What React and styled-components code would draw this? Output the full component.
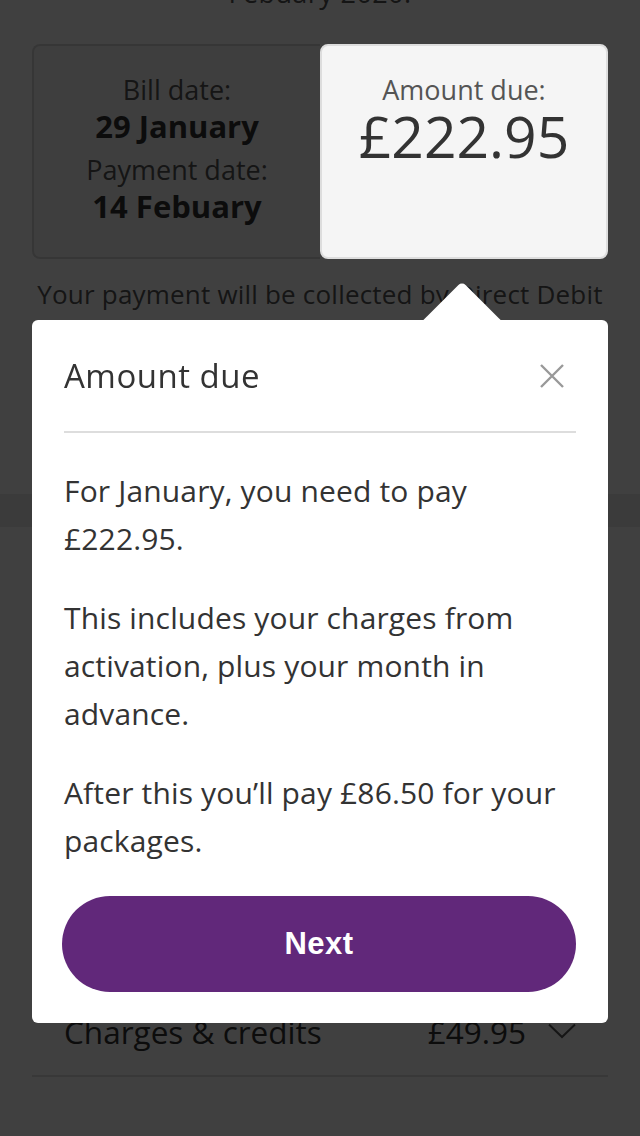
import React from "react";
import styled, { createGlobalStyle } from "styled-components";

const GlobalStyle = createGlobalStyle`
  html, body {
    margin: 0;
    padding: 0;
    background: #ffffff;
    font-family: "Open Sans", "Noto Sans", sans-serif;
    color: #333;
    overflow: hidden;
  }
`;

const Page = styled.div`
  width: 640px;
  min-height: 1136px;
`;

const Summary = styled.section`
  display: flow-root;
  padding: 0 32px;
  height: 494px;
  box-sizing: border-box;
`;

const Intro = styled.p`
  margin: -25px 0 0;
  font-size: 27px;
  line-height: 36px;
  letter-spacing: 0.4px;
  text-align: center;
  color: #555;
`;

const Cards = styled.div`
  margin-top: 33px;
  display: grid;
  grid-template-columns: 1fr 1fr;
  height: 215px;
`;

const DateCard = styled.div`
  box-sizing: border-box;
  background: #f7f7f7;
  border: 2px solid #d8d8d8;
  border-right: none;
  border-radius: 8px 0 0 8px;
  padding-top: 26px;
  text-align: center;
`;

const AmountCard = styled.div`
  position: relative;
  z-index: 20;
  box-sizing: border-box;
  background: #f5f5f5;
  border: 2px solid #dddddd;
  border-radius: 8px;
  padding-top: 26px;
  text-align: center;
`;

const Label = styled.div`
  font-size: 27px;
  line-height: 36px;
  color: #555;
`;

const DateValue = styled.div`
  font-size: 31px;
  line-height: 36px;
  margin-bottom: 8px;
  font-weight: 700;
  color: #333;
`;

const BigAmount = styled.div`
  font-size: 57px;
  line-height: 56px;
  font-weight: 500;
  color: #333;
`;

const Notice = styled.p`
  margin: 17px 0 0;
  font-size: 26px;
  line-height: 36px;
  letter-spacing: 0.2px;
  color: #555;
  text-align: center;
  white-space: nowrap;
`;

const Band = styled.div`
  height: 33px;
  background: #ececec;
`;

const Breakdown = styled.section`
  padding: 460px 32px 0;
`;

const Row = styled.div`
  height: 88px;
  border-bottom: 2px solid #dddddd;
  display: flex;
  align-items: center;
  padding: 0 32px;
  font-size: 31.5px;
  color: #333;
`;

const RowLabel = styled.span`
  flex: 1;
`;

const RowValue = styled.span`
  margin-right: 22px;
`;

const Chevron = () => (
  <svg width="28" height="16" viewBox="0 0 28 16" fill="none">
    <path d="M1 1.5 L14 14 L27 1.5" stroke="#555" strokeWidth="2" />
  </svg>
);

const Overlay = styled.div`
  position: fixed;
  inset: 0;
  z-index: 10;
  background: rgba(0, 0, 0, 0.75);
`;

const Popover = styled.div`
  position: absolute;
  top: 320px;
  left: 32px;
  width: 576px;
  box-sizing: border-box;
  background: #ffffff;
  border-radius: 6px;
  padding: 0 32px 31px;

  &::before {
    content: "";
    position: absolute;
    top: -27px;
    left: 402px;
    width: 56px;
    height: 56px;
    background: #ffffff;
    border-radius: 5px 0 0 0;
    transform: rotate(45deg);
  }
`;

const PopHeader = styled.div`
  position: relative;
  height: 111px;
  display: flex;
  align-items: center;
  justify-content: space-between;
  border-bottom: 2px solid #dddddd;
`;

const PopTitle = styled.h2`
  margin: 0;
  font-size: 33px;
  font-weight: 500;
  letter-spacing: 0.5px;
  color: #333;
`;

const CloseButton = styled.button`
  border: none;
  background: none;
  padding: 0;
  margin-right: 11px;
  width: 26px;
  height: 26px;
  display: flex;
  cursor: pointer;
`;

const PopBody = styled.div`
  padding-top: 34px;
`;

const Para = styled.p`
  margin: 0 0 31px;
  font-size: 30px;
  line-height: 48px;
  letter-spacing: 0.15px;
  color: #333;
`;

const NextButton = styled.button`
  display: block;
  width: 514px;
  height: 96px;
  margin-left: -2px;
  border: none;
  border-radius: 48px;
  background: #61287a;
  color: #ffffff;
  font-family: "Liberation Sans", Arial, sans-serif;
  font-size: 31px;
  font-weight: 700;
  letter-spacing: 0.5px;
  cursor: pointer;
`;

const CloseIcon = () => (
  <svg width="26" height="26" viewBox="0 0 26 26">
    <path d="M2 2 L24 24 M24 2 L2 24" stroke="#999" strokeWidth="2.4" />
  </svg>
);

export default function App() {
  return (
    <>
      <GlobalStyle />
      <Page>
        <Summary>
          <Intro>Febuary 2020.</Intro>
          <Cards>
            <DateCard>
              <Label>Bill date:</Label>
              <DateValue>29 January</DateValue>
              <Label>Payment date:</Label>
              <DateValue>14 Febuary</DateValue>
            </DateCard>
            <AmountCard>
              <Label>Amount due:</Label>
              <BigAmount>£222.95</BigAmount>
            </AmountCard>
          </Cards>
          <Notice>Your payment will be collected by Direct Debit</Notice>
        </Summary>
        <Band />
        <Breakdown>
          <Row>
            <RowLabel>Charges &amp; credits</RowLabel>
            <RowValue>£49.95</RowValue>
            <Chevron />
          </Row>
        </Breakdown>
        <Overlay>
          <Popover>
            <PopHeader>
              <PopTitle>Amount due</PopTitle>
              <CloseButton aria-label="Close">
                <CloseIcon />
              </CloseButton>
            </PopHeader>
            <PopBody>
              <Para>For January, you need to pay £222.95.</Para>
              <Para>
                This includes your charges from activation, plus your month in
                advance.
              </Para>
              <Para>After this you’ll pay £86.50 for your packages.</Para>
              <NextButton>Next</NextButton>
            </PopBody>
          </Popover>
        </Overlay>
      </Page>
    </>
  );
}
